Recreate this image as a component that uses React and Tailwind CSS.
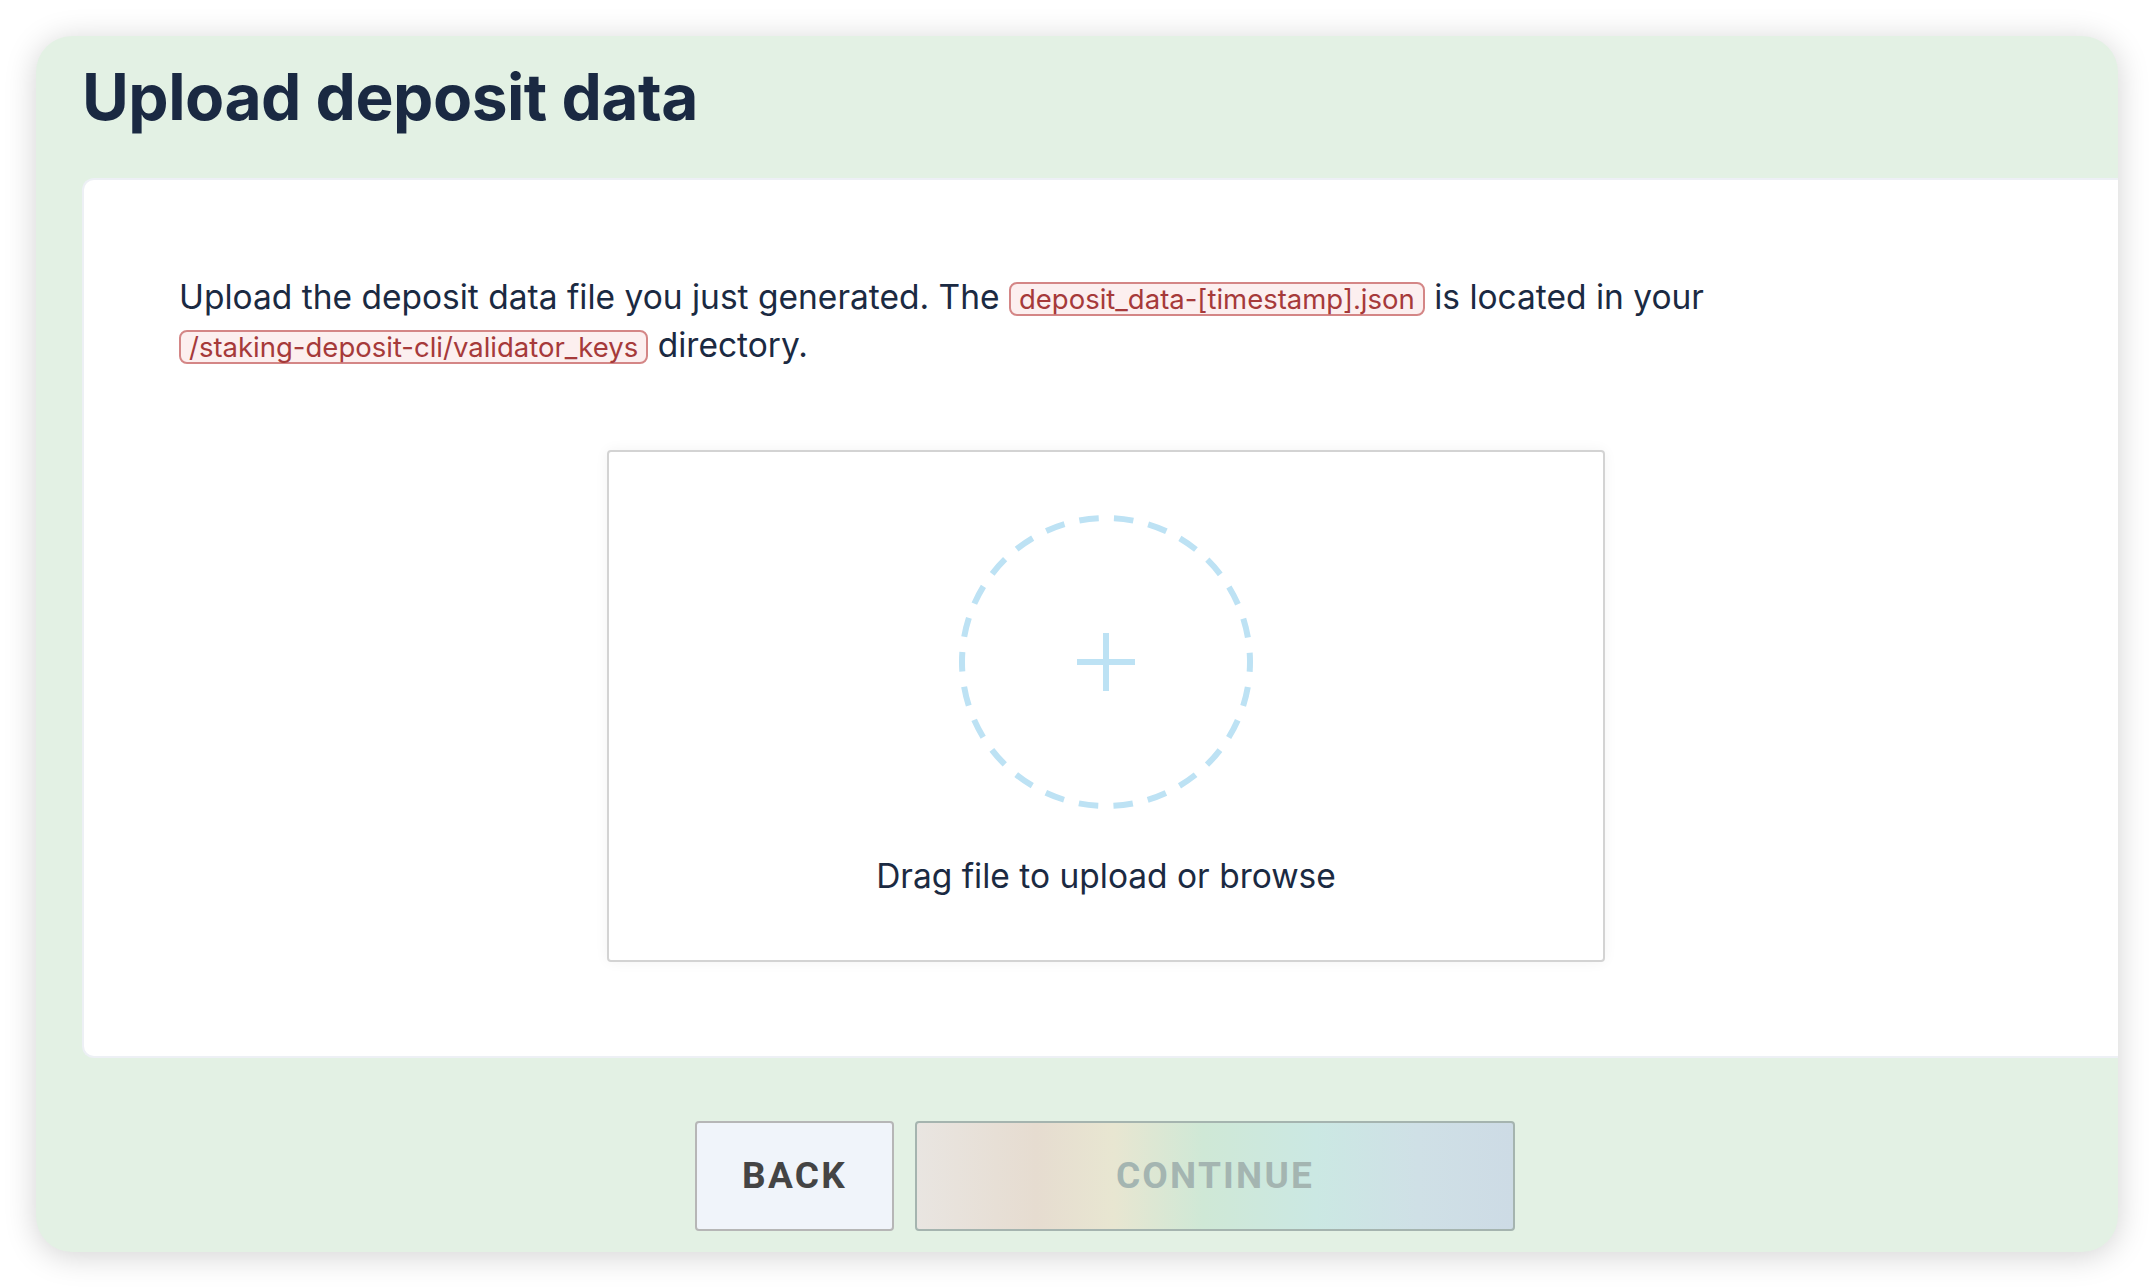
import React from 'react';

const Code = ({ children }) => (
  <span className="inline-block rounded-lg border-2 border-[#d48686] bg-[#fcefef] px-[8px] text-[27.5px] leading-[30px] text-[#a63a3a]">
    {children}
  </span>
);

const App = () => {
  return (
    <div className="min-h-screen bg-white p-[36px] font-['Inter','Noto_Sans',sans-serif]">
      <div className="flex h-[1216px] flex-col overflow-hidden rounded-[36px] bg-[#e3f1e4] shadow-[0_4px_32px_rgba(0,0,0,0.18)]">
        {/* Heading */}
        <header className="h-[142px] shrink-0 pl-[46px] pt-[29px]">
          <h1 className="text-[64px] font-bold leading-none tracking-[-0.5px] text-[#1a2942]">
            Upload deposit data
          </h1>
        </header>

        {/* Card */}
        <section className="ml-[46px] h-[880px] shrink-0 rounded-l-xl border-2 border-r-0 border-[#edf0f5] bg-white pl-[95px] pr-[85px] pt-[93px]">
          <p className="max-w-[1640px] text-[33.5px] leading-[48px] text-[#1b2a42]">
            Upload the deposit data file you just generated. The{' '}
            <Code>deposit_data-[timestamp].json</Code> is located in your{' '}
            <Code>/staking-deposit-cli/validator_keys</Code> directory.
          </p>

          <div className="mx-auto mt-[81px] flex h-[512px] w-[998px] flex-col items-center rounded border-2 border-[#d3d3d3] pt-[60px] shadow-[0_0_14px_rgba(0,0,0,0.05)]">
            <svg width="300" height="300" viewBox="0 0 300 300">
              <circle
                cx="150"
                cy="150"
                r="144"
                fill="none"
                stroke="#bde2f4"
                strokeWidth="6"
                strokeDasharray="19.5 15.3"
                strokeDashoffset="9.7"
              />
              <path d="M121 150h58M150 121v58" stroke="#bde2f4" strokeWidth="6" />
            </svg>
            <p className="mt-[40px] text-[33.5px] leading-[48px] text-[#1b2a42]">
              Drag file to upload or browse
            </p>
          </div>
        </section>

        {/* Actions */}
        <div className="flex flex-1 items-start justify-center gap-[21px] pl-[56px] pt-[63px] font-['Roboto',sans-serif]">
          <button className="h-[110px] w-[199px] rounded border-2 border-[#b6b6b6] bg-[#f0f4fa] text-[37px] font-bold tracking-[0.06em] text-[#444]">
            BACK
          </button>
          <button
            disabled
            className="h-[110px] w-[600px] rounded border-2 border-[#a5b4af] bg-[linear-gradient(90deg,#e9e5e1_0%,#e6dcd0_20%,#e8e6d1_33%,#cfe8d6_48%,#cbe8e3_67%,#cfe0e6_84%,#cddbe5_100%)] text-[37px] font-bold tracking-[0.06em] text-[#a4b5b1]"
          >
            CONTINUE
          </button>
        </div>
      </div>
    </div>
  );
};

export default App;
